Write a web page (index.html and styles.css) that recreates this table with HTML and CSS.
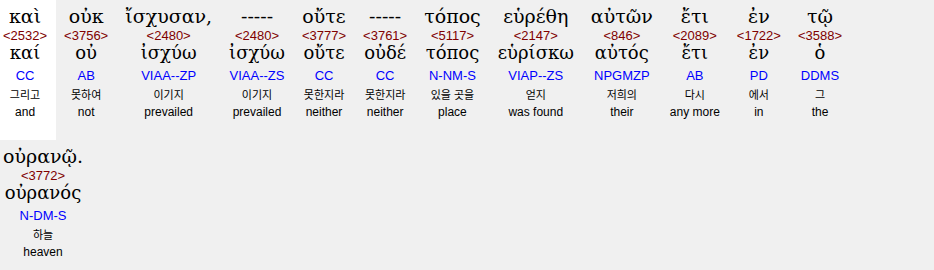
FILE: index.html
```html
<!DOCTYPE html>
<html lang="ko">
<head>
<meta charset="utf-8">
<title>Interlinear</title>
<link rel="stylesheet" href="styles.css">
</head>
<body>
<div class="verse">
  <div class="cell selected">
    <div class="word">καὶ</div><div class="num">&lt;2532&gt;</div><div class="lemma">καί</div><div class="morph">CC</div><div class="ko">그리고</div><div class="en">and</div>
  </div>
  <div class="cell">
    <div class="word">οὐκ</div><div class="num">&lt;3756&gt;</div><div class="lemma">οὐ</div><div class="morph">AB</div><div class="ko">못하여</div><div class="en">not</div>
  </div>
  <div class="cell">
    <div class="word">ἴσχυσαν,</div><div class="num">&lt;2480&gt;</div><div class="lemma">ἰσχύω</div><div class="morph">VIAA--ZP</div><div class="ko">이기지</div><div class="en">prevailed</div>
  </div>
  <div class="cell">
    <div class="word">-----</div><div class="num">&lt;2480&gt;</div><div class="lemma">ἰσχύω</div><div class="morph">VIAA--ZS</div><div class="ko">이기지</div><div class="en">prevailed</div>
  </div>
  <div class="cell">
    <div class="word">οὔτε</div><div class="num">&lt;3777&gt;</div><div class="lemma">οὔτε</div><div class="morph">CC</div><div class="ko">못한지라</div><div class="en">neither</div>
  </div>
  <div class="cell">
    <div class="word">-----</div><div class="num">&lt;3761&gt;</div><div class="lemma">οὐδέ</div><div class="morph">CC</div><div class="ko">못한지라</div><div class="en">neither</div>
  </div>
  <div class="cell">
    <div class="word">τόπος</div><div class="num">&lt;5117&gt;</div><div class="lemma">τόπος</div><div class="morph">N-NM-S</div><div class="ko">있을 곳을</div><div class="en">place</div>
  </div>
  <div class="cell">
    <div class="word">εὑρέθη</div><div class="num">&lt;2147&gt;</div><div class="lemma">εὑρίσκω</div><div class="morph">VIAP--ZS</div><div class="ko">얻지</div><div class="en">was found</div>
  </div>
  <div class="cell">
    <div class="word">αὐτῶν</div><div class="num">&lt;846&gt;</div><div class="lemma">αὐτός</div><div class="morph">NPGMZP</div><div class="ko">저희의</div><div class="en">their</div>
  </div>
  <div class="cell">
    <div class="word">ἔτι</div><div class="num">&lt;2089&gt;</div><div class="lemma">ἔτι</div><div class="morph">AB</div><div class="ko">다시</div><div class="en">any more</div>
  </div>
  <div class="cell">
    <div class="word">ἐν</div><div class="num">&lt;1722&gt;</div><div class="lemma">ἐν</div><div class="morph">PD</div><div class="ko">에서</div><div class="en">in</div>
  </div>
  <div class="cell">
    <div class="word">τῷ</div><div class="num">&lt;3588&gt;</div><div class="lemma">ὁ</div><div class="morph">DDMS</div><div class="ko">그</div><div class="en">the</div>
  </div>
  <div class="cell">
    <div class="word">οὐρανῷ.</div><div class="num">&lt;3772&gt;</div><div class="lemma">οὐρανός</div><div class="morph">N-DM-S</div><div class="ko">하늘</div><div class="en">heaven</div>
  </div>
</div>
</body>
</html>
```

FILE: styles.css
```css
html, body {
  margin: 0;
  padding: 0;
  background: #f0f0f0;
}

.verse {
  display: flex;
  flex-wrap: wrap;
  align-items: flex-start;
  width: 890px;
}

.cell {
  box-sizing: border-box;
  height: 140px;
  padding: 3px 9px 0 3px;
  margin-right: 5px;
  text-align: center;
  white-space: nowrap;
  font-family: "Liberation Sans", Arial, sans-serif;
  color: #000;
}

.cell.selected {
  background: #ffffff;
}

.word {
  font-family: "DejaVu Serif", "Liberation Serif", serif;
  font-size: 19px;
  line-height: 26px;
  height: 26px;
}

.num {
  font-size: 13px;
  line-height: 13px;
  height: 13px;
  color: #800000;
}

.lemma {
  font-family: "DejaVu Serif", "Liberation Serif", serif;
  font-size: 18px;
  line-height: 22px;
  height: 22px;
}

.morph {
  font-size: 13px;
  line-height: 23px;
  height: 23px;
  color: #0000ff;
}

.ko {
  font-family: "Noto Sans CJK KR", sans-serif;
  font-size: 11px;
  line-height: 14px;
  height: 14px;
}

.en {
  font-size: 12px;
  line-height: 22px;
  height: 22px;
}
```
